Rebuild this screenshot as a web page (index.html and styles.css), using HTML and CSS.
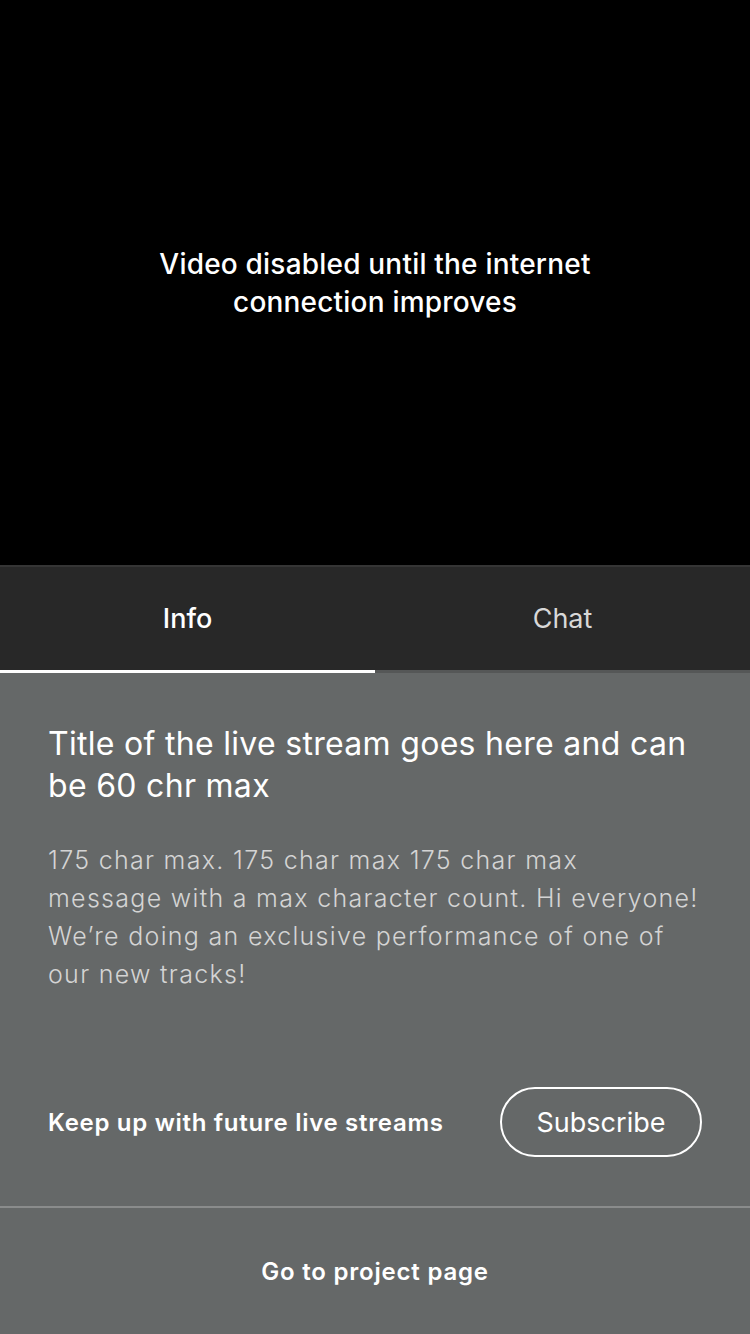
FILE: index.html
```html
<!DOCTYPE html>
<html>
<head>
<meta charset="utf-8">
<link rel="stylesheet" href="styles.css">
</head>
<body>
<div class="screen">
  <div class="video">
    <p class="video-msg">Video disabled until the internet<br>connection improves</p>
  </div>
  <div class="tabs">
    <div class="tab active">Info</div>
    <div class="tab">Chat</div>
  </div>
  <div class="info">
    <h1 class="title">Title of the live stream goes here and can be 60 chr max</h1>
    <p class="desc">175 char max. 175 char max 175 char max<br>message with a max character count. Hi everyone!<br>We’re doing an exclusive performance of one of<br>our new tracks!</p>
    <div class="subscribe-row">
      <span class="keep">Keep up with future live streams</span>
      <button class="subscribe">Subscribe</button>
    </div>
  </div>
  <div class="footer">Go to project page</div>
</div>
</body>
</html>
```
FILE: styles.css
```css
* { box-sizing: border-box; }
html, body { margin: 0; padding: 0; }
body {
  width: 750px;
  height: 1334px;
  background: #656868;
  font-family: Inter, Roboto, "Liberation Sans", sans-serif;
  color: #fff;
}
.screen {
  display: flex;
  flex-direction: column;
  height: 1334px;
}
.video {
  height: 565px;
  background: #000;
  display: flex;
  align-items: center;
  justify-content: center;
}
.video-msg {
  margin: 0;
  text-align: center;
  font-size: 28px;
  line-height: 38px;
  font-weight: 500;
  letter-spacing: 0.2px;
}
.tabs {
  display: flex;
  height: 108px;
  background: #282828;
  border-top: 2px solid #353535;
  border-bottom: 3px solid #555757;
}
.tab {
  flex: 1;
  display: flex;
  align-items: center;
  justify-content: center;
  font-size: 27px;
  color: #d8d8d8;
  margin-bottom: -3px;
  border-bottom: 3px solid transparent;
}
.tab.active {
  color: #fff;
  font-weight: 500;
  border-bottom-color: #fff;
}
.info {
  flex: 1;
  padding: 50px 48px 0 48px;
}
.title {
  margin: 0;
  font-size: 32px;
  line-height: 42px;
  font-weight: 400;
  color: #fff;
  letter-spacing: 0.3px;
}
.desc {
  margin: 34px -40px 0 0;
  font-size: 25px;
  line-height: 38px;
  color: #d4d4d4;
  font-weight: 300;
  letter-spacing: 1.3px;
}
.subscribe-row {
  display: flex;
  align-items: center;
  justify-content: space-between;
  margin-top: 94px;
}
.keep {
  font-size: 24px;
  font-weight: 600;
  letter-spacing: 0.7px;
}
.subscribe {
  width: 202px;
  height: 70px;
  border: 2px solid #fff;
  border-radius: 35px;
  background: transparent;
  color: #fff;
  font-family: inherit;
  font-size: 27px;
}
.footer {
  height: 128px;
  border-top: 2px solid #8a8c8c;
  display: flex;
  align-items: center;
  justify-content: center;
  font-size: 24px;
  font-weight: 600;
  letter-spacing: 0.8px;
}
```
